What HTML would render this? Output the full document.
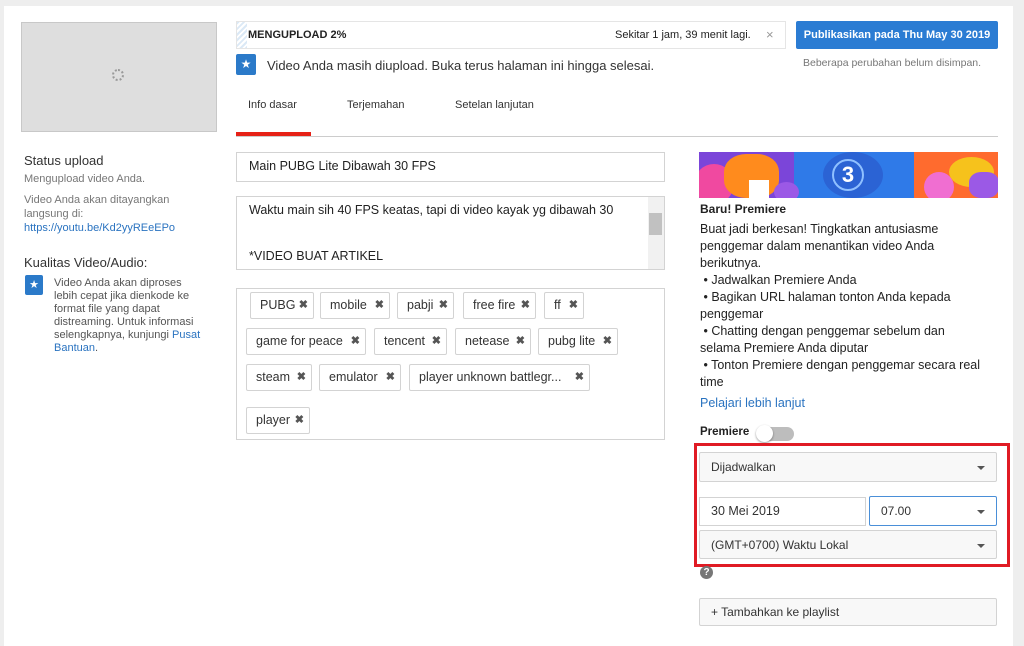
<!DOCTYPE html>
<html><head><meta charset="utf-8"><style>
*{box-sizing:border-box;margin:0;padding:0}
body{width:1024px;height:638px;background:#eeeeee;font-family:"Liberation Sans",Arial,sans-serif;position:relative;overflow:hidden;color:#333}
.a{position:absolute}
.card{left:4px;top:6px;width:1009px;height:640px;background:#fff}
.tag{position:absolute;height:27px;border:1px solid #d3d3d3;border-radius:2px;font-size:12.5px;color:#333;line-height:25px;padding-left:9px;background:#fff;white-space:nowrap}
.tag b{position:absolute;right:5px;top:0;font-size:11px;color:#555}
.sel{border:1px solid #d3d3d3;background:#f8f8f8;border-radius:2px;font-size:12px;color:#333;line-height:28px;padding-left:11px}
.tri{position:absolute;right:11px;top:13px;width:0;height:0;border-left:4px solid transparent;border-right:4px solid transparent;border-top:4px solid #555}
.s13{font-size:12.5px;color:#222;line-height:17px}
</style></head><body>
<div class="a card"></div>
<div class="a" style="left:21px;top:22px;width:196px;height:110px;background:#dedede;border:1px solid #c8c8c8"></div>
<div class="a" style="left:112px;top:69px;width:12px;height:12px;border-radius:50%;border:2px dotted #999"></div>
<div class="a" style="left:24px;top:153px;font-size:13px;color:#333">Status upload</div>
<div class="a" style="left:24px;top:173px;font-size:11px;color:#777">Mengupload video Anda.</div>
<div class="a" style="left:24px;top:193px;font-size:11px;color:#777;line-height:14px">Video Anda akan ditayangkan<br>langsung di:<br><span style="color:#2a73c0">https://youtu.be/Kd2yyREeEPo</span></div>
<div class="a" style="left:24px;top:255px;font-size:13px;color:#333">Kualitas Video/Audio:</div>
<div class="a" style="left:25px;top:275px;width:18px;height:20px;background:#2b7ac9;border-radius:2px;color:#fff;font-size:11px;text-align:center;line-height:20px">★</div>
<div class="a" style="left:54px;top:277px;font-size:11px;color:#555;line-height:13px;width:150px">Video Anda akan diproses lebih cepat jika dienkode ke format file yang dapat distreaming. Untuk informasi selengkapnya, kunjungi <span style="color:#2a73c0">Pusat Bantuan</span>.</div>
<div class="a" style="left:236px;top:21px;width:550px;height:28px;border:1px solid #e5e5e5;background:#fff"></div>
<div class="a" style="left:237px;top:22px;width:10px;height:26px;background:repeating-linear-gradient(135deg,#dbe9f6 0 2px,#fff 2px 4px)"></div>
<div class="a" style="left:248px;top:29px;font-size:11px;font-weight:bold;color:#222">MENGUPLOAD 2%</div>
<div class="a" style="left:615px;top:29px;font-size:11px;color:#222">Sekitar 1 jam, 39 menit lagi.</div>
<div class="a" style="left:766px;top:27px;font-size:13px;color:#999">×</div>
<div class="a" style="left:796px;top:21px;width:202px;height:28px;background:#2b7cd3;border-radius:2px;color:#fff;font-size:11px;font-weight:bold;text-align:center;line-height:28px">Publikasikan pada Thu May 30 2019</div>
<div class="a" style="left:803px;top:57px;font-size:10.5px;color:#777">Beberapa perubahan belum disimpan.</div>
<div class="a" style="left:236px;top:54px;width:20px;height:21px;background:#2b7ac9;border-radius:2px;color:#fff;font-size:12px;text-align:center;line-height:21px">★</div>
<div class="a" style="left:267px;top:58px;font-size:13px;color:#333">Video Anda masih diupload. Buka terus halaman ini hingga selesai.</div>
<div class="a" style="left:248px;top:99px;font-size:11px;color:#333">Info dasar</div>
<div class="a" style="left:347px;top:99px;font-size:11px;color:#333">Terjemahan</div>
<div class="a" style="left:455px;top:99px;font-size:11px;color:#333">Setelan lanjutan</div>
<div class="a" style="left:236px;top:136px;width:762px;height:1px;background:#ccc"></div>
<div class="a" style="left:236px;top:132px;width:75px;height:4px;background:#e62117"></div>
<div class="a" style="left:236px;top:152px;width:429px;height:30px;border:1px solid #d3d3d3"></div>
<div class="a" style="left:249px;top:159px;font-size:12.5px;color:#222">Main PUBG Lite Dibawah 30 FPS</div>
<div class="a" style="left:236px;top:196px;width:429px;height:74px;border:1px solid #d3d3d3"></div>
<div class="a" style="left:648px;top:197px;width:16px;height:72px;background:#f1f1f1"></div>
<div class="a" style="left:649px;top:213px;width:13px;height:22px;background:#c1c1c1"></div>
<div class="a" style="left:249px;top:203px;font-size:12.5px;color:#222">Waktu main sih 40 FPS keatas, tapi di video kayak yg dibawah 30</div>
<div class="a" style="left:249px;top:249px;font-size:12.5px;color:#222">*VIDEO BUAT ARTIKEL</div>
<div class="a" style="left:236px;top:288px;width:429px;height:152px;border:1px solid #d3d3d3"></div>
<div class="tag" style="left:250px;top:292px;width:64px">PUBG<b>✖</b></div>
<div class="tag" style="left:320px;top:292px;width:70px">mobile<b>✖</b></div>
<div class="tag" style="left:397px;top:292px;width:57px">pabji<b>✖</b></div>
<div class="tag" style="left:463px;top:292px;width:73px">free fire<b>✖</b></div>
<div class="tag" style="left:544px;top:292px;width:40px">ff<b>✖</b></div>
<div class="tag" style="left:246px;top:328px;width:120px">game for peace<b>✖</b></div>
<div class="tag" style="left:374px;top:328px;width:73px">tencent<b>✖</b></div>
<div class="tag" style="left:455px;top:328px;width:76px">netease<b>✖</b></div>
<div class="tag" style="left:538px;top:328px;width:80px">pubg lite<b>✖</b></div>
<div class="tag" style="left:246px;top:364px;width:66px">steam<b>✖</b></div>
<div class="tag" style="left:319px;top:364px;width:82px">emulator<b>✖</b></div>
<div class="tag" style="left:409px;top:364px;width:181px">player unknown battlegr...<b>✖</b></div>
<div class="tag" style="left:246px;top:407px;width:64px">player<b>✖</b></div>
<div class="a" style="left:699px;top:152px;width:299px;height:46px;background:#2f7ae8;overflow:hidden">
<div class="a" style="left:0;top:0;width:95px;height:46px;background:#7b45d9"></div>
<div class="a" style="left:-5px;top:12px;width:40px;height:40px;border-radius:50%;background:#f049a0"></div>
<div class="a" style="left:25px;top:2px;width:55px;height:44px;border-radius:40%;background:#ff8b1d"></div>
<div class="a" style="left:50px;top:28px;width:20px;height:18px;background:#fff"></div>
<div class="a" style="left:75px;top:30px;width:25px;height:20px;border-radius:50%;background:#9b59e6"></div>
<div class="a" style="left:124px;top:0;width:60px;height:46px;background:#2b63d4;border-radius:50%"></div>
<div class="a" style="left:133px;top:7px;width:32px;height:32px;border-radius:50%;border:2px solid #8fc0ff;color:#fff;font-size:22px;font-weight:bold;text-align:center;line-height:28px">3</div>
<div class="a" style="left:215px;top:0;width:84px;height:46px;background:#ff6b2e"></div>
<div class="a" style="left:225px;top:20px;width:30px;height:30px;border-radius:50%;background:#f06ed1"></div>
<div class="a" style="left:250px;top:5px;width:45px;height:30px;border-radius:50%;background:#f6c21c"></div>
<div class="a" style="left:270px;top:20px;width:30px;height:26px;background:#9b59e6;border-radius:40%"></div>
</div>
<div class="a" style="left:700px;top:202px;font-size:12px;font-weight:bold;color:#222">Baru! Premiere</div>
<div class="a s13" style="left:700px;top:221px;width:285px">Buat jadi berkesan! Tingkatkan antusiasme penggemar dalam menantikan video Anda berikutnya.</div>
<div class="a s13" style="left:700px;top:272px;width:284px">&nbsp;• Jadwalkan Premiere Anda<br>&nbsp;• Bagikan URL halaman tonton Anda kepada penggemar<br>&nbsp;• Chatting dengan penggemar sebelum dan selama Premiere Anda diputar<br>&nbsp;• Tonton Premiere dengan penggemar secara real time</div>
<div class="a" style="left:700px;top:396px;font-size:12.5px;color:#2a73c0">Pelajari lebih lanjut</div>
<div class="a" style="left:700px;top:426px;font-size:11.5px;font-weight:bold;color:#222">Premiere</div>
<div class="a" style="left:757px;top:427px;width:37px;height:14px;border-radius:7px;background:#bdbdbd"></div>
<div class="a" style="left:756px;top:425px;width:17px;height:17px;border-radius:50%;background:#fff;box-shadow:0 1px 2px rgba(0,0,0,.4)"></div>
<div class="a" style="left:694px;top:443px;width:316px;height:124px;border:3px solid #e01b24"></div>
<div class="a sel" style="left:699px;top:452px;width:298px;height:30px">Dijadwalkan<span class="tri"></span></div>
<div class="a" style="left:699px;top:497px;width:167px;height:29px;border:1px solid #d3d3d3;font-size:12.5px;color:#333;line-height:27px;padding-left:11px">30 Mei 2019</div>
<div class="a sel" style="left:869px;top:496px;width:128px;height:30px;border-color:#4a8fd8;background:#fff">07.00<span class="tri"></span></div>
<div class="a sel" style="left:699px;top:530px;width:298px;height:29px">(GMT+0700) Waktu Lokal<span class="tri"></span></div>
<div class="a" style="left:700px;top:566px;width:13px;height:13px;border-radius:50%;background:#777;color:#fff;font-size:10px;font-weight:bold;text-align:center;line-height:13px">?</div>
<div class="a sel" style="left:699px;top:598px;width:298px;height:28px;line-height:26px">+ Tambahkan ke playlist</div>
</body></html>
